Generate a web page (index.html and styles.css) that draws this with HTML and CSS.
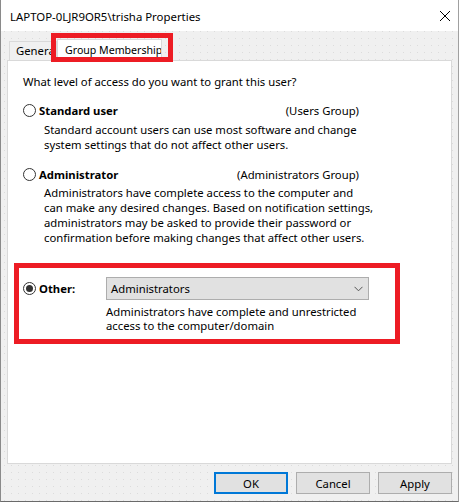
FILE: index.html
```html
<!DOCTYPE html>
<html lang="en">
<head>
  <meta charset="UTF-8" />
  <title>trisha Properties</title>
  <link rel="stylesheet" href="styles.css">
</head>
<body>
  <div class="window">

    <!-- Title bar -->
    <div class="titlebar">
      <span class="title">LAPTOP-0LJR9OR5\trisha Properties</span>
      <svg class="close" width="12" height="12" viewBox="0 0 12 12">
        <path d="M1 1 L11 11 M11 1 L1 11" stroke="#000" stroke-width="1" fill="none"/>
      </svg>
    </div>

    <div class="body">
      <!-- Tabs -->
      <div class="tabs">
        <div class="tab">General</div>
        <div class="tab active">Group Membership</div>
      </div>

      <!-- Tab page -->
      <div class="panel">
        <p class="question">What level of access do you want to grant this user?</p>

        <div class="option">
          <div class="option-head">
            <span class="radio"></span>
            <span class="label">Standard user</span>
            <span class="group">(Users Group)</span>
          </div>
          <p class="desc">Standard account users can use most software and change<br>system settings that do not affect other users.</p>
        </div>

        <div class="option admin">
          <div class="option-head">
            <span class="radio"></span>
            <span class="label">Administrator</span>
            <span class="group">(Administrators Group)</span>
          </div>
          <p class="desc">Administrators have complete access to the computer and<br>can make any desired changes. Based on notification settings,<br>administrators may be asked to provide their password or<br>confirmation before making changes that affect other users.</p>
        </div>

        <div class="option other">
          <div class="option-head">
            <span class="radio checked"></span>
            <span class="label other-label">Other:</span>
            <div class="select">
              <span>Administrators</span>
              <svg width="9" height="6" viewBox="0 0 9 6">
                <path d="M0.5 0.8 L4.5 4.8 L8.5 0.8" stroke="#555" stroke-width="1" fill="none"/>
              </svg>
            </div>
          </div>
          <p class="desc other-desc">Administrators have complete and unrestricted<br>access to the computer/domain</p>
        </div>
      </div>

      <!-- Buttons -->
      <div class="buttons">
        <button class="btn default">OK</button>
        <button class="btn">Cancel</button>
        <button class="btn">Apply</button>
      </div>
    </div>

    <!-- Red highlight annotations -->
    <div class="mark mark-tab"></div>
    <div class="mark mark-other"></div>
  </div>
</body>
</html>
```

FILE: styles.css
```css
body, html {
  margin: 0;
  padding: 0;
  background-color: #ffffff;
  font-family: "Noto Sans", "Open Sans", sans-serif;
  font-size: 11.3px;
  color: #000;
}

.window {
  position: relative;
  width: 457px;
  height: 501px;
  border-left: 1px solid #8a8a8a;
  border-right: 1px solid #a0a0a0;
  border-bottom: 1px solid #6a6a6a;
  background-color: #f0f0f0;
  background-image: radial-gradient(circle, #dcdcdc 0.6px, transparent 1px);
  background-size: 7px 7px;
  overflow: hidden;
}

.titlebar {
  height: 31px;
  background-color: #fff;
  display: flex;
  align-items: center;
  justify-content: space-between;
  padding: 0 7px 0 9px;
  box-sizing: border-box;
}

.title {
  font-size: 11.4px;
  margin-top: 1px;
}

.body {
  padding: 7px 6px 0 6px;
}

.tabs {
  display: flex;
  align-items: flex-end;
  height: 22px;
  padding-left: 2px;
}

.tab {
  height: 18px;
  line-height: 18px;
  padding: 0 6px;
  border: 1px solid #d9d9d9;
  border-bottom: none;
  background-color: #f0f0f0;
  width: 34px;
  overflow: hidden;
  white-space: nowrap;
}

.tab.active {
  height: 22px;
  line-height: 20px;
  width: 105px;
  padding: 0 0 0 7px;
  box-sizing: border-box;
  font-size: 10.6px;
  background-color: #fff;
  margin-left: 0;
  margin-bottom: -1px;
  position: relative;
}

.panel {
  height: 404px;
  box-sizing: border-box;
  background-color: #fff;
  border: 1px solid #d9d9d9;
  padding: 13px 0 0 15px;
}

.panel p {
  margin: 0;
  line-height: 15px;
}

.option-head {
  display: flex;
  align-items: center;
  width: 336px;
  height: 15px;
}

.option {
  margin-top: 14px;
}

.option.admin {
  margin-top: 15px;
}

.option.other {
  margin-top: 32px;
}

.option.other .option-head {
  height: 23px;
  width: auto;
}

.radio {
  width: 11px;
  height: 11px;
  border: 1px solid #333;
  border-radius: 50%;
  background: #fff;
  box-sizing: content-box;
  position: relative;
  flex: none;
}

.radio.checked::after {
  content: "";
  position: absolute;
  left: 2px;
  top: 2px;
  width: 7px;
  height: 7px;
  border-radius: 50%;
  background: #333;
}

.label {
  font-weight: bold;
  margin-left: 3px;
}

.group {
  margin-left: auto;
}

.desc {
  margin-left: 21px !important;
  margin-top: 4px !important;
}

.admin .desc {
  margin-top: 3px !important;
}

.other-label {
  width: 67px;
}

.select {
  width: 263px;
  height: 23px;
  box-sizing: border-box;
  border: 1px solid #adadad;
  background-color: #e1e1e1;
  display: flex;
  align-items: center;
  justify-content: space-between;
  padding: 0 5px 0 4px;
}

.other-desc {
  margin-left: 83px !important;
  margin-top: 5px !important;
  line-height: 14px !important;
}

.buttons {
  display: flex;
  justify-content: flex-end;
  gap: 8px;
  padding-top: 8px;
}

.btn {
  width: 74px;
  height: 22px;
  box-sizing: border-box;
  border: 1px solid #adadad;
  background-color: #e1e1e1;
  font-family: "Noto Sans", "Open Sans", sans-serif;
  font-size: 11.3px;
  color: #000;
  padding: 0;
}

.btn.default {
  border: 2px solid #0078d7;
}

.mark {
  position: absolute;
  border: 5px solid #ed1c24;
  box-sizing: border-box;
}

.mark-tab {
  left: 50px;
  top: 33px;
  width: 122px;
  height: 29px;
}

.mark-other {
  left: 13px;
  top: 263px;
  width: 386px;
  height: 81px;
}
```
